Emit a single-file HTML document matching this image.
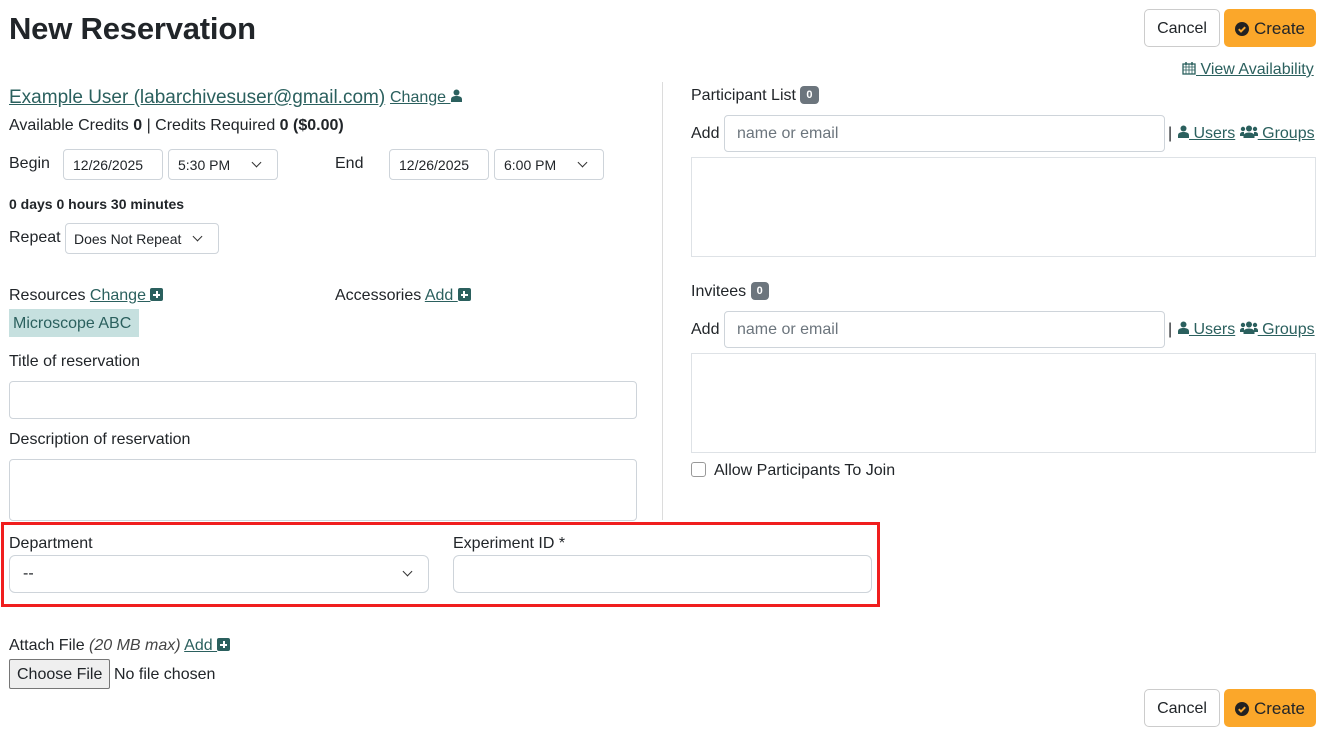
<!DOCTYPE html>
<html><head><style>
*{box-sizing:border-box;margin:0;padding:0}
body{width:1326px;height:750px;position:relative;font-family:"Liberation Sans",sans-serif;font-size:16px;color:#212529;background:#fff;overflow:hidden}
.a{position:absolute;white-space:nowrap}
.l{color:#2b605e;text-decoration:underline}
.box{position:absolute;border:1px solid #ced4da;border-radius:4px;background:#fff}
.sm{font-size:14px}
.chev{position:absolute;width:7px;height:7px;border-right:1.5px solid #333;border-bottom:1.5px solid #333;transform:rotate(45deg)}
.btn{position:absolute;border-radius:5px;font-size:16px;display:flex;align-items:center;justify-content:center;padding-top:2px}
.cancel{border:1px solid #ccc;background:#fff;color:#212529}
.create{background:#fba72a;color:#212529}
.badge{display:inline-block;background:#6c757d;color:#fff;font-size:11px;font-weight:bold;border-radius:4px;padding:3px 6px;vertical-align:2px}
.plus{display:inline-block;width:13px;height:13px;background:#2b605e;border-radius:2px;position:relative;vertical-align:-1px}
.plus:before{content:"";position:absolute;left:3px;top:5.5px;width:7px;height:2px;background:#fff}
.plus:after{content:"";position:absolute;left:5.5px;top:3px;width:2px;height:7px;background:#fff}
.ph{color:#6c757d}
</style></head><body>
<div class="a" style="left:9px;top:11px;font-size:31px;font-weight:bold;letter-spacing:-0.2px">New Reservation</div>
<div class="btn cancel" style="left:1144px;top:9px;width:76px;height:38px">Cancel</div>
<div class="btn create" style="left:1224px;top:9px;width:92px;height:38px;font-size:17px"><svg width="14" height="14" viewBox="0 0 14 14" style="margin-right:5px"><circle cx="7" cy="7" r="7" fill="#222"/><path d="M3.8 7.2l2.2 2.2 4.2-4.2" stroke="#fba72a" stroke-width="2" fill="none"/></svg>Create</div>
<div class="a l" style="left:1182px;top:61px"><svg width="14" height="14" viewBox="0 0 14 14" style="vertical-align:-1px"><rect x="1" y="3" width="12" height="10" fill="none" stroke="#2b605e" stroke-width="1.3"/><path d="M1 6h12M4 3v10M7 3v10M10 3v10M1 9h12" stroke="#2b605e" stroke-width="0.8"/><path d="M4 1v3M10 1v3" stroke="#2b605e" stroke-width="1.5"/></svg> View Availability</div>

<div class="a l" style="left:9px;top:87px;font-size:19px">Example User (labarchivesuser@gmail.com)</div>
<div class="a" style="left:390px;top:89px"><span class="l">Change </span><svg width="11" height="13" viewBox="0 0 11 13"><circle cx="5.5" cy="3.5" r="3" fill="#2b605e"/><path d="M0 13v-2.5c0-2.5 2-3.5 5.5-3.5s5.5 1 5.5 3.5V13z" fill="#2b605e"/></svg></div>
<div class="a" style="left:9px;top:117px">Available Credits <b>0</b> | Credits Required <b>0 ($0.00)</b></div>

<div class="a" style="left:9px;top:155px">Begin</div>
<div class="box sm" style="left:63px;top:149px;width:100px;height:31px;padding:7px 0 0 9px">12/26/2025</div>
<div class="box sm" style="left:168px;top:149px;width:110px;height:31px;padding:7px 0 0 9px">5:30 PM<span class="chev" style="left:84px;top:9px"></span></div>
<div class="a" style="left:335px;top:155px">End</div>
<div class="box sm" style="left:389px;top:149px;width:100px;height:31px;padding:7px 0 0 9px">12/26/2025</div>
<div class="box sm" style="left:494px;top:149px;width:110px;height:31px;padding:7px 0 0 9px">6:00 PM<span class="chev" style="left:84px;top:9px"></span></div>

<div class="a sm" style="left:9px;top:196px;font-weight:bold">0 days 0 hours 30 minutes</div>
<div class="a" style="left:9px;top:229px">Repeat</div>
<div class="box sm" style="left:65px;top:223px;width:154px;height:31px;padding:7px 0 0 8px">Does Not Repeat<span class="chev" style="left:128px;top:9px"></span></div>

<div class="a" style="left:9px;top:287px">Resources <span class="l">Change </span><span class="plus"></span></div>
<div class="a" style="left:335px;top:287px">Accessories <span class="l">Add </span><span class="plus"></span></div>
<div class="a" style="left:9px;top:309px;width:130px;height:28px;background:#c6e0df;color:#2b605e;padding:6px 0 0 4px">Microscope ABC</div>

<div class="a" style="left:9px;top:353px">Title of reservation</div>
<div class="box" style="left:9px;top:381px;width:628px;height:38px"></div>
<div class="a" style="left:9px;top:431px">Description of reservation</div>
<div class="box" style="left:9px;top:459px;width:628px;height:62px"></div>

<div class="a" style="left:662px;top:82px;width:1px;height:438px;background:#dcdcdc"></div>

<div class="a" style="left:691px;top:86px">Participant List <span class="badge">0</span></div>
<div class="a" style="left:691px;top:125px">Add</div>
<div class="box ph" style="left:724px;top:115px;width:441px;height:37px;padding:9px 0 0 12px">name or email</div>
<div class="a" style="left:1168px;top:125px">|</div>
<div class="a" style="left:1178px;top:125px"><svg width="11" height="13" viewBox="0 0 11 13"><circle cx="5.5" cy="3.5" r="3" fill="#2b605e"/><path d="M0 13v-2.5c0-2.5 2-3.5 5.5-3.5s5.5 1 5.5 3.5V13z" fill="#2b605e"/></svg><span class="l"> Users</span> <svg width="18" height="13" viewBox="0 0 18 13"><circle cx="9" cy="3.5" r="3" fill="#2b605e"/><path d="M3.5 13v-2c0-2 2-3.5 5.5-3.5s5.5 1.5 5.5 3.5v2z" fill="#2b605e"/><circle cx="3" cy="4" r="2.2" fill="#2b605e"/><circle cx="15" cy="4" r="2.2" fill="#2b605e"/><path d="M0 11v-1.5C0 8 1 7 3 7h1v4zM18 11v-1.5C18 8 17 7 15 7h-1v4z" fill="#2b605e"/></svg><span class="l"> Groups</span></div>
<div class="box" style="left:691px;top:157px;width:625px;height:100px;border-radius:0;border-color:#dee2e6"></div>

<div class="a" style="left:691px;top:282px">Invitees <span class="badge">0</span></div>
<div class="a" style="left:691px;top:321px">Add</div>
<div class="box ph" style="left:724px;top:311px;width:441px;height:37px;padding:9px 0 0 12px">name or email</div>
<div class="a" style="left:1168px;top:321px">|</div>
<div class="a" style="left:1178px;top:321px"><svg width="11" height="13" viewBox="0 0 11 13"><circle cx="5.5" cy="3.5" r="3" fill="#2b605e"/><path d="M0 13v-2.5c0-2.5 2-3.5 5.5-3.5s5.5 1 5.5 3.5V13z" fill="#2b605e"/></svg><span class="l"> Users</span> <svg width="18" height="13" viewBox="0 0 18 13"><circle cx="9" cy="3.5" r="3" fill="#2b605e"/><path d="M3.5 13v-2c0-2 2-3.5 5.5-3.5s5.5 1.5 5.5 3.5v2z" fill="#2b605e"/><circle cx="3" cy="4" r="2.2" fill="#2b605e"/><circle cx="15" cy="4" r="2.2" fill="#2b605e"/><path d="M0 11v-1.5C0 8 1 7 3 7h1v4zM18 11v-1.5C18 8 17 7 15 7h-1v4z" fill="#2b605e"/></svg><span class="l"> Groups</span></div>
<div class="box" style="left:691px;top:353px;width:625px;height:100px;border-radius:0;border-color:#dee2e6"></div>
<div class="box" style="left:691px;top:462px;width:15px;height:15px;border-color:#999;border-radius:3px"></div>
<div class="a" style="left:714px;top:462px">Allow Participants To Join</div>

<div class="a" style="left:1px;top:522px;width:879px;height:85px;border:3px solid #f01e1e"></div>
<div class="a" style="left:9px;top:535px">Department</div>
<div class="box" style="left:9px;top:555px;width:420px;height:38px;border-radius:6px;padding:9px 0 0 13px">--<span class="chev" style="left:394px;top:12px"></span></div>
<div class="a" style="left:453px;top:535px">Experiment ID *</div>
<div class="box" style="left:453px;top:555px;width:419px;height:38px;border-radius:6px"></div>

<div class="a" style="left:9px;top:637px">Attach File <i style="color:#444">(20 MB max)</i> <span class="l">Add </span><span class="plus"></span></div>
<div class="a" style="left:9px;top:659px;width:101px;height:30px;background:#efefef;border:1px solid #767676;border-radius:2px;padding:6px 0 0 7px">Choose File</div>
<div class="a" style="left:114px;top:666px">No file chosen</div>

<div class="btn cancel" style="left:1144px;top:689px;width:76px;height:38px">Cancel</div>
<div class="btn create" style="left:1224px;top:689px;width:92px;height:38px;font-size:17px"><svg width="14" height="14" viewBox="0 0 14 14" style="margin-right:5px"><circle cx="7" cy="7" r="7" fill="#222"/><path d="M3.8 7.2l2.2 2.2 4.2-4.2" stroke="#fba72a" stroke-width="2" fill="none"/></svg>Create</div>
</body></html>
